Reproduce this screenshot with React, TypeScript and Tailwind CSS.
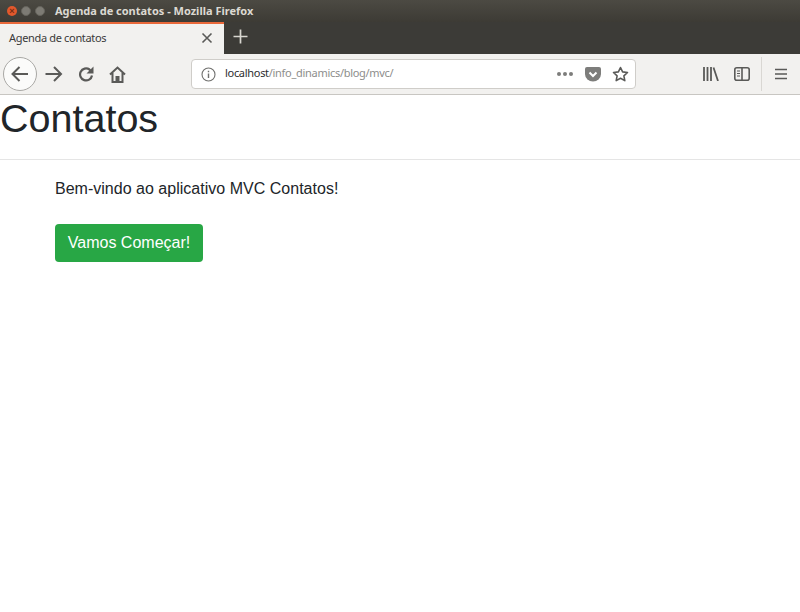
import React from "react";

const G = "#5a5a58";

function Ic({ w = 20, h = 20, children }: { w?: number; h?: number; children: React.ReactNode }) {
  return (
    <svg width={w} height={h} viewBox={`0 0 ${w} ${h}`} fill="none" stroke={G} strokeWidth={2} className="shrink-0">
      {children}
    </svg>
  );
}

export default function App() {
  return (
    <div className="flex h-[612px] w-[800px] flex-col overflow-hidden bg-white font-['Liberation_Sans',sans-serif]">
      {/* title bar */}
      <div className="flex h-[22px] items-center bg-gradient-to-b from-[#4c4a43] to-[#3d3b35] pl-[7px]">
        <span className="flex h-[10px] w-[10px] items-center justify-center rounded-full bg-[#e2582c] text-[9px] font-bold leading-none text-[#7a2c12]">×</span>
        <span className="ml-[4px] h-[10px] w-[10px] rounded-full border border-[#65635c] bg-[#7d7b74]" />
        <span className="ml-[4px] h-[10px] w-[10px] rounded-full border border-[#65635c] bg-[#7d7b74]" />
        <span className="ml-[10px] font-['Noto_Sans','Open_Sans',sans-serif] text-[11px] font-bold text-[#dcd9d2]">
          Agenda de contatos - Mozilla Firefox
        </span>
      </div>

      {/* tab bar */}
      <div className="flex h-[32px] bg-[#3c3b37]">
        <div className="flex w-[224px] flex-col border-t-2 border-[#e9683a] bg-[#f2f1ef]">
          <div className="flex flex-1 items-center justify-between pb-[2px] pl-[9px] pr-[10px]">
            <span className="font-['Noto_Sans','Open_Sans',sans-serif] text-[11px] tracking-[-0.33px] text-[#3a3a3a]">Agenda de contatos</span>
            <Ic w={14} h={14}>
              <path d="M2.500 2.500l9 9M11.500 2.500l-9 9" strokeWidth={1.6} />
            </Ic>
          </div>
        </div>
        <div className="ml-[9px] flex items-center pb-[3px]">
          <svg width="15" height="15" viewBox="0 0 15 15" stroke="#d8d6d0" strokeWidth="1.700" fill="none">
            <path d="M7.500 .5v14M.5 7.500h14" />
          </svg>
        </div>
      </div>

      {/* nav bar */}
      <div className="flex h-[41px] items-center border-b border-[#c8c6c2] bg-[#f2f1ef] pl-[3px]">
        <div className="flex h-[34px] w-[34px] items-center justify-center rounded-full border border-[#a9a8a5] bg-[#fbfbfa]">
          <svg width="18" height="16" viewBox="0 0 18 16" fill="none" stroke={G} strokeWidth="2">
            <path d="M1.500 8H17M8.500 1L1.500 8l7 7" />
          </svg>
        </div>
        <div className="ml-[8px]">
          <svg width="18" height="16" viewBox="0 0 18 16" fill="none" stroke={G} strokeWidth="2" className="block">
            <path d="M0.500 8H16M9 1l7 7-7 7" />
          </svg>
        </div>
        <div className="ml-[15px]">
          <svg width="16" height="16" viewBox="0 0 16 16" fill="none" stroke={G} strokeWidth="2.200" className="block">
            <path d="M14 9.500A6 6 0 1 1 11.500 3.500L13 5" />
            <path d="M15.500 .5v7h-7z" fill={G} stroke="none" />
          </svg>
        </div>
        <div className="ml-[15px]">
          <svg width="17" height="17" viewBox="0 0 17 17" fill="none" stroke={G} strokeWidth="2" className="block">
            <path d="M1 8.500l7.500-7 7.500 7M3.500 7v9h10V7" />
            <path d="M6.500 16v-6h4v6z" fill={G} stroke="none" />
          </svg>
        </div>

        {/* url bar */}
        <div className="ml-[65px] flex h-[30px] w-[445px] items-center rounded-[4px] border border-[#cfcdc9] bg-white pl-[9px] pr-[6px]">
          <svg width="15" height="15" viewBox="0 0 15 15" fill="none" stroke="#6f6f6d" strokeWidth="1.100">
            <circle cx="7.500" cy="7.500" r="6.500" />
            <path d="M7.500 6.500v4.500M7.500 3.800v1.400" strokeWidth="1.400" />
          </svg>
          <span className="ml-[9px] -mt-[2px] font-['Noto_Sans','Open_Sans',sans-serif] text-[11px] tracking-[-0.3px] text-[#2e2e2e]">
            localhost<span className="text-[#8d8d8b]">/info_dinamics/blog/mvc/</span>
          </span>
          <span className="ml-auto flex gap-[2px]">
            <span className="h-1 w-1 rounded-full bg-[#7d7d7b]" />
            <span className="h-1 w-1 rounded-full bg-[#7d7d7b]" />
            <span className="h-1 w-1 rounded-full bg-[#7d7d7b]" />
          </span>
          <svg width="16" height="15" viewBox="0 0 16 15" className="ml-[12px]">
            <path d="M2 0h12a2 2 0 0 1 2 2v5a8 7.500 0 0 1-16 0V2a2 2 0 0 1 2-2z" fill="#7d7d7b" />
            <path d="M4.500 5.500L8 9l3.500-3.500" fill="none" stroke="#fff" strokeWidth="2" />
          </svg>
          <svg width="17" height="16" viewBox="0 0 17 16" fill="none" stroke={G} strokeWidth="1.600" className="ml-[11px]">
            <path d="M8.500 1.500l2.100 4.400 4.900.6-3.600 3.300.9 4.800-4.300-2.400-4.300 2.400.9-4.800L1.500 6.500l4.900-.6z" strokeLinejoin="round" />
          </svg>
        </div>

        {/* right tools */}
        <svg width="16" height="14" viewBox="0 0 16 14" fill="none" stroke={G} strokeWidth="1.800" className="ml-[67px]">
          <path d="M1 0v14M4.500 0v14M8 0v14M10.500 0.500L15 14" />
        </svg>
        <svg width="16" height="14" viewBox="0 0 16 14" fill="none" stroke={G} strokeWidth="1.600" className="ml-[15px]">
          <rect x=".8" y=".8" width="14.400" height="12.400" rx="2" />
          <path d="M8 .8v12.400" />
          <path d="M3 4h3M3 6.500h3M3 9h3" strokeWidth="1" />
        </svg>
        <div className="ml-[11px] h-[34px] w-px bg-[#d9d7d3]" />
        <svg width="12" height="12" viewBox="0 0 12 12" stroke={G} strokeWidth="1.700" className="ml-[13px]">
          <path d="M0 1.500h12M0 6h12M0 10.500h12" />
        </svg>
      </div>

      {/* page */}
      <div className="flex-1 text-[#212529]">
        <div className="h-[65px] border-b border-[#e5e5e5]">
          <h1 className="text-[39.5px] leading-[46px]">Contatos</h1>
        </div>
        <div className="pl-[55px] pt-[17px]">
          <p className="text-[16px] leading-[24px] tracking-[0.015px]">Bem-vindo ao aplicativo MVC Contatos!</p>
          <button className="mt-[23px] block h-[38px] w-[148px] rounded-[4px] bg-[#28a745] text-[16px] text-white">
            Vamos Começar!
          </button>
        </div>
      </div>
    </div>
  );
}
